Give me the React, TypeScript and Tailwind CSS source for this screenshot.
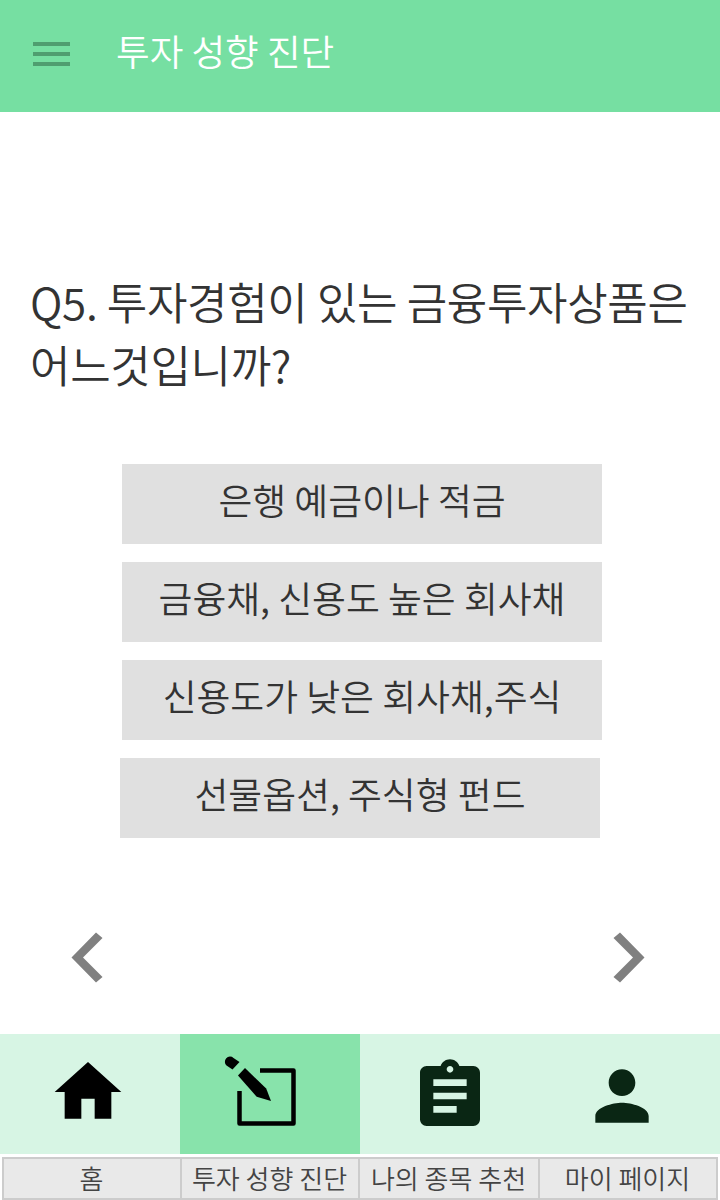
import { ReactNode } from "react";

const options = [
  { label: "은행 예금이나 적금", cls: "ml-[122px]" },
  { label: "금융채, 신용도 높은 회사채", cls: "ml-[122px]" },
  { label: "신용도가 낮은 회사채,주식", cls: "ml-[122px]" },
  { label: "선물옵션, 주식형 펀드", cls: "ml-[120px]" },
];

const labels = [
  { text: "홈", cls: "w-[180px]" },
  { text: "투자 성향 진단", cls: "w-[178px]" },
  { text: "나의 종목 추천", cls: "w-[180px]" },
  { text: "마이 페이지", cls: "w-[178px]" },
];

function NavCell({ active, children }: { active?: boolean; children: ReactNode }) {
  return (
    <div className={`flex-1 h-[120px] flex items-start justify-center ${active ? "bg-[#88e3ab]" : ""}`}>
      {children}
    </div>
  );
}

export default function App() {
  return (
    <div
      className="w-[720px] h-[1200px] flex flex-col bg-white overflow-hidden font-[350]"
      style={{ fontFamily: '"Noto Sans CJK KR", "Noto Sans", sans-serif' }}
    >
      <header className="h-[112px] shrink-0 bg-[#76dfa2] flex items-start">
        <div className="ml-[33px] mt-[42px] w-[37px] flex flex-col gap-[6px]">
          <div className="h-[4px] bg-[#4f9e70]" />
          <div className="h-[4px] bg-[#4f9e70]" />
          <div className="h-[4px] bg-[#4f9e70]" />
        </div>
        <h1 className="ml-[46px] mt-[25px] text-[36.6px] leading-[52px] font-[350] text-white">투자 성향 진단</h1>
      </header>

      <main className="flex-1 flex flex-col">
        <p className="mt-[158px] ml-[30px] mr-[20px] text-[44px] leading-[63px] tracking-[-0.35px] text-[#333333]">
          Q5. 투자경험이 있는 금융투자상품은 어느것입니까?
        </p>

        <div className="mt-[68px] flex flex-col gap-[18px]">
          {options.map((o) => (
            <button
              key={o.label}
              className={`${o.cls} w-[480px] h-[80px] bg-[#e0e0e0] text-[36.8px] leading-[68px] pb-[10px] text-[#333333] text-center`}
            >
              {o.label}
            </button>
          ))}
        </div>

        <div className="mt-[94px] flex justify-between pl-[71px] pr-[75px]">
          <svg width="34" height="52" viewBox="0 0 34 52" fill="#808080">
            <polygon points="25,0.5 31.5,6 12,25.5 31.5,45 25,50.5 0.5,25.5" />
          </svg>
          <svg width="34" height="52" viewBox="0 0 34 52" fill="#808080">
            <polygon points="9,0.5 2.5,6 22,25.5 2.5,45 9,50.5 33.5,25.5" />
          </svg>
        </div>
      </main>

      <nav className="h-[120px] shrink-0 bg-[#d7f5e4] flex">
        <NavCell>
          <svg className="mt-[18px] mr-[4px]" width="80" height="80" viewBox="0 0 24 24" fill="#000000">
            <path d="M10 20v-6h4v6h5v-8h3L12 3 2 12h3v8z" />
          </svg>
        </NavCell>
        <NavCell active>
          <svg className="mt-[20px] mr-[18px]" width="78" height="72" viewBox="0 0 78 72" fill="none">
            <path d="M17.5 8 L10.5 15.5 L4.5 11.5 A5 5 0 0 1 11.5 4 Z" fill="#000000" />
            <path d="M23 14 L16 21.5 L34.7 42.7 L49 47 L44.2 34.5 Z" fill="#000000" />
            <path d="M38 16.5 H71.5 V69.5 H17.5 V37" stroke="#000000" strokeWidth="4.5" strokeLinejoin="round" />
          </svg>
        </NavCell>
        <NavCell>
          <svg className="mt-[22px]" width="80" height="80" viewBox="0 0 24 24" fill="#0a2614">
            <path d="M19 3h-4.18C14.4 1.84 13.3 1 12 1c-1.3 0-2.4.84-2.82 2H5c-1.1 0-2 .9-2 2v14c0 1.1.9 2 2 2h14c1.1 0 2-.9 2-2V5c0-1.1-.9-2-2-2zm-7 0c.55 0 1 .45 1 1s-.45 1-1 1-1-.45-1-1 .45-1 1-1zm2 14H7v-2h7v2zm3-4H7v-2h10v2zm0-4H7V7h10v2z" />
          </svg>
        </NavCell>
        <NavCell>
          <svg className="mt-[22px] mr-[16px]" width="80" height="80" viewBox="0 0 24 24" fill="#0a2614">
            <path d="M12 12c2.21 0 4-1.79 4-4s-1.79-4-4-4-4 1.79-4 4 1.79 4 4 4zm0 2c-2.67 0-8 1.34-8 4v2h16v-2c0-2.66-5.33-4-8-4z" />
          </svg>
        </NavCell>
      </nav>

      <div className="h-[46px] shrink-0 flex pl-[2px] pt-[3px] bg-white">
        {labels.map((l) => (
          <div
            key={l.text}
            className={`${l.cls} h-[43px] bg-[#e9e9e9] border-2 border-[#cccccc] border-l-0 first:border-l-2 flex items-center justify-center pb-[2px] pr-[1px] text-[26px] leading-none text-[#444444] whitespace-nowrap`}
          >
            {l.text}
          </div>
        ))}
      </div>
    </div>
  );
}
